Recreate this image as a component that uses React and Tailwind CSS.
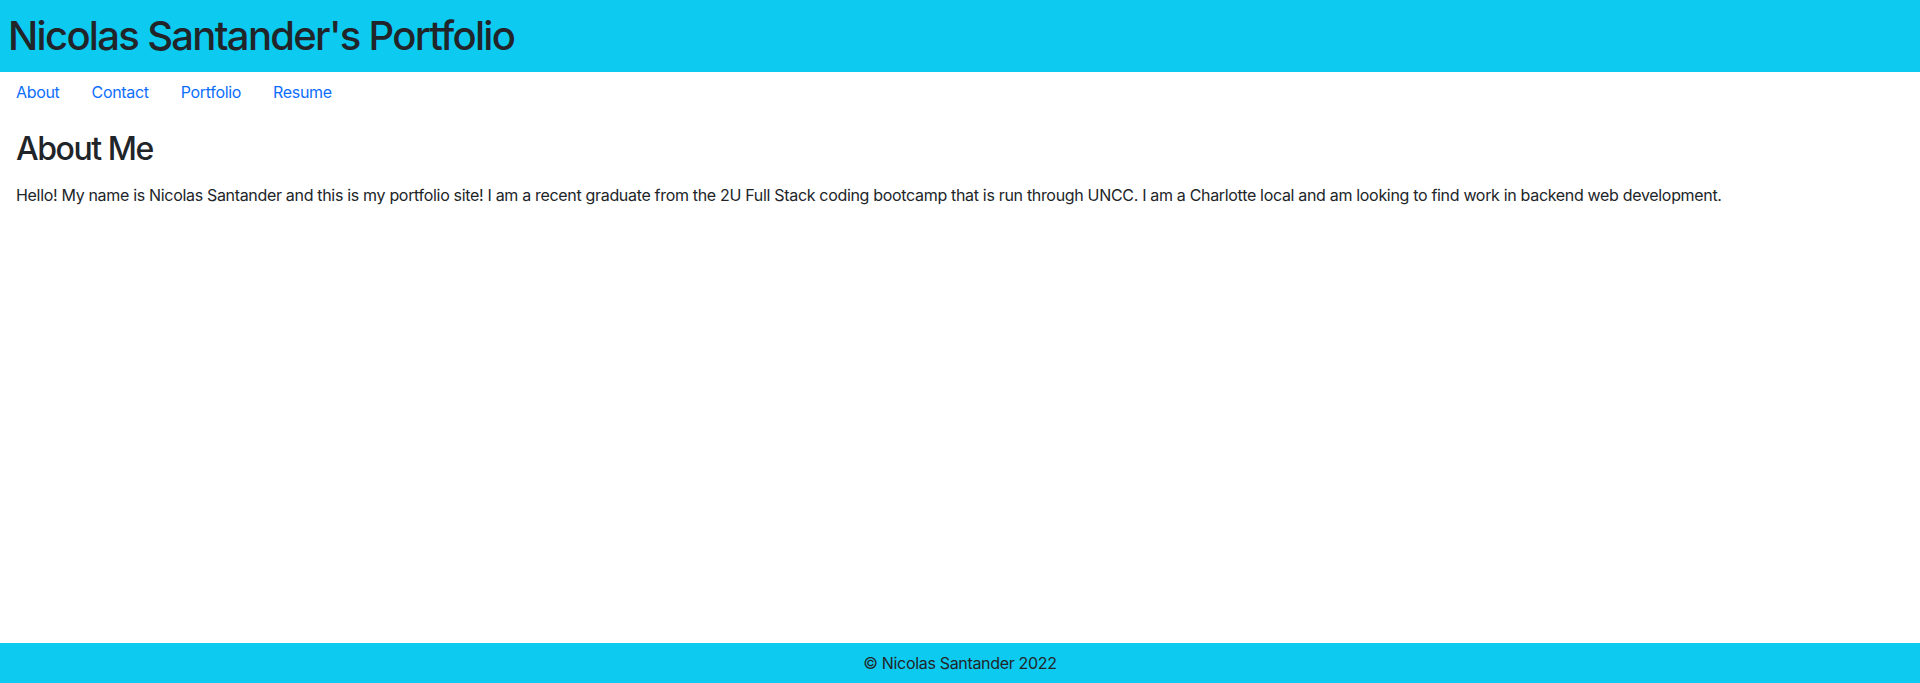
import React from "react";

const links = ["About", "Contact", "Portfolio", "Resume"];

const App = () => {
  return (
    <div className="min-h-screen flex flex-col text-[#212529] font-['Inter',sans-serif] tracking-[-0.02em]">
      <header className="bg-[#0dcaf0] h-[72px] flex items-center px-2">
        <h1 className="text-[40px] leading-[1.2] font-medium tracking-[-0.042em]">Nicolas Santander's Portfolio</h1>
      </header>
      <nav className="flex">
        {links.map((l) => (
          <a key={l} href="#" className="px-4 py-2 text-base leading-6 text-[#0d6efd]">
            {l}
          </a>
        ))}
      </nav>
      <main className="flex-1 px-4 pt-[18px]">
        <h2 className="text-[32px] leading-[1.2] font-medium mb-[15px] tracking-[-0.045em]">About Me</h2>
        <p className="text-base leading-6">
          Hello! My name is Nicolas Santander and this is my portfolio site! I am a recent graduate from the 2U Full Stack coding bootcamp that is run through UNCC. I am a Charlotte local and am looking to find work in backend web development.
        </p>
      </main>
      <footer className="bg-[#0dcaf0] h-10 flex items-center justify-center text-base">
        © Nicolas Santander 2022
      </footer>
    </div>
  );
};

export default App;
